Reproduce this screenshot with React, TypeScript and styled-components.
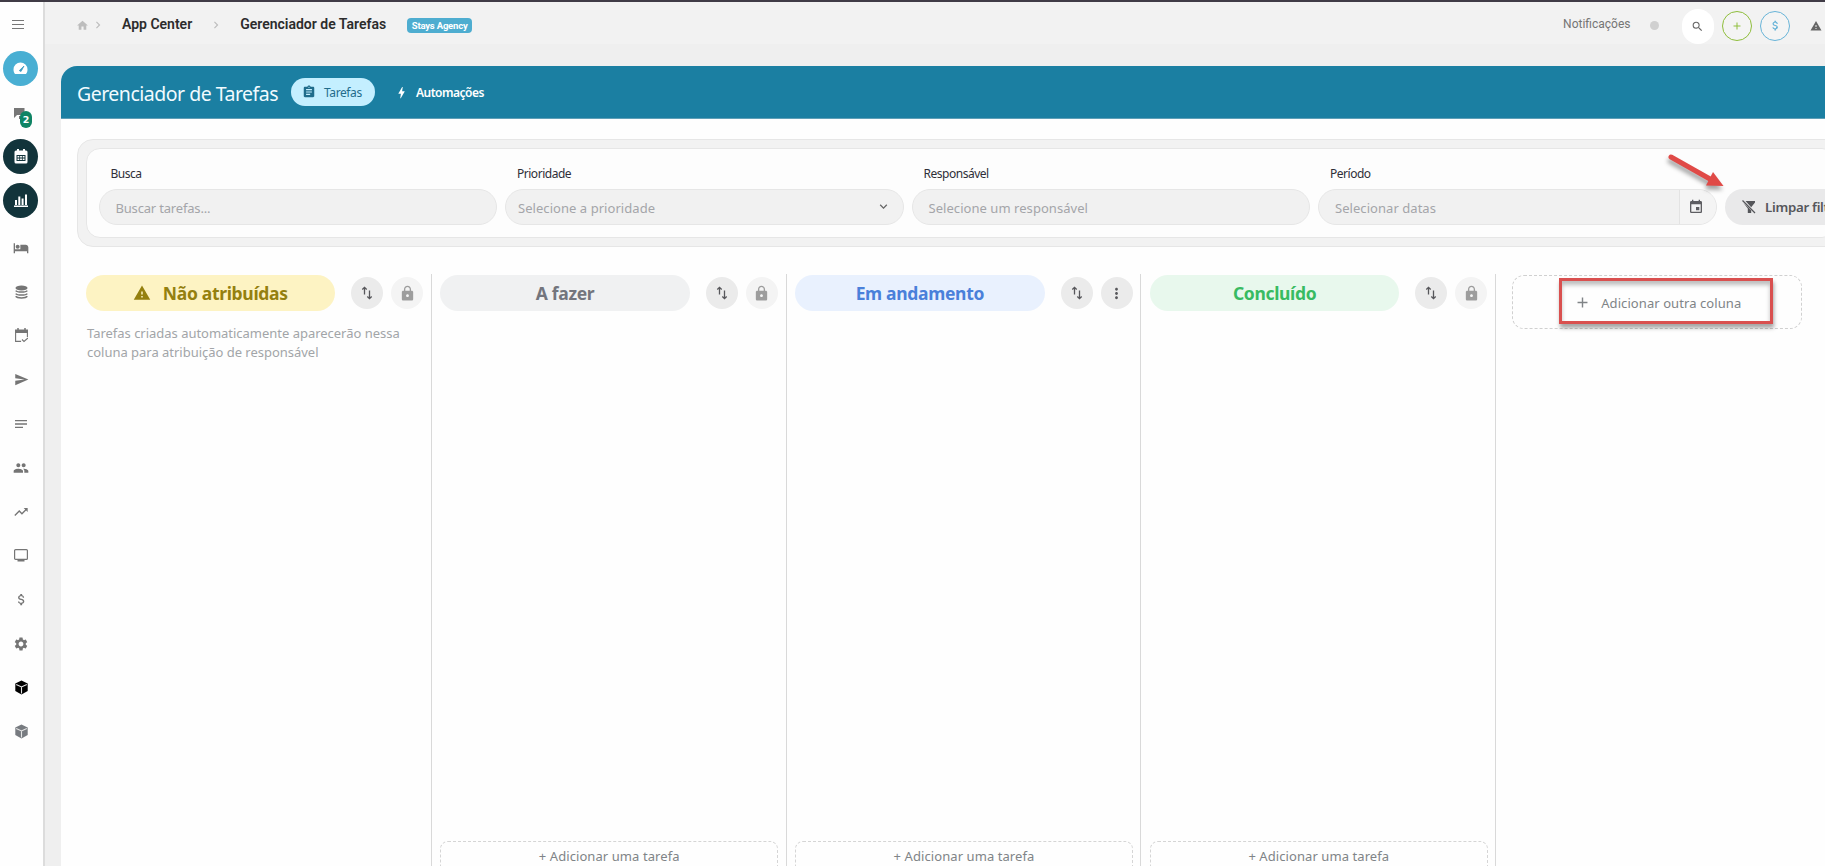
import React from "react";
import styled, { createGlobalStyle, css } from "styled-components";
import {
  MdHome, MdChevronRight, MdHotel, MdSend, MdPeople, MdTrendingUp,
  MdAttachMoney, MdSettings, MdSearch, MdAdd, MdWarning, MdLock, MdMoreVert, MdAssignment,
  MdBolt, MdEvent, MdExpandMore, MdNotes,
} from "react-icons/md";

const GlobalStyle = createGlobalStyle`
  *, *::before, *::after { box-sizing: border-box; }
  html, body { margin: 0; padding: 0; overflow: hidden; }
  body { font-family: "Noto Sans", "Open Sans", sans-serif; background: #efefef; }
  svg { display: block; flex: none; }
`;

const Page = styled.div`
  position: relative;
  width: 100vw;
  height: 100vh;
  display: flex;
  overflow: hidden;
  border-top: 2px solid #403c46;
`;

/* Sidebar */
const Sidebar = styled.nav`
  flex: none;
  width: 45px;
  background: #fefefe;
  border-right: 2px solid #dcdcdc;
  display: flex;
  flex-direction: column;
  color: #757575;
`;
const MenuSlot = styled.div`
  height: 44px;
  padding: 18px 0 0 12px;
`;
const NavItem = styled.div<{ $gapTop?: number }>`
  position: relative;
  width: 42px;
  height: 44px;
  flex: none;
  margin-top: ${(p) => p.$gapTop ?? 0}px;
  display: flex;
  align-items: center;
  justify-content: center;
`;
const NavDisc = styled.div<{ $bg: string }>`
  width: 35px;
  height: 35px;
  margin-right: 1px;
  border-radius: 50%;
  background: ${(p) => p.$bg};
  color: #fff;
  display: flex;
  align-items: center;
  justify-content: center;
`;
const NavBadge = styled.span`
  position: absolute;
  left: 20px;
  top: 21px;
  width: 12px;
  height: 17px;
  border-radius: 6px;
  background: #0f8465;
  color: #fff;
  font: 700 9.5px/17px "DejaVu Sans", sans-serif;
  text-align: center;
`;

/* Top bar */
const Main = styled.div`
  flex: 1;
  min-width: 0;
  display: flex;
  flex-direction: column;
  background: linear-gradient(#f2f2f2 0 42px, #efefef 42px);
`;
const TopBar = styled.header`
  flex: none;
  height: 64px;
  padding: 0 2px 18px 31px;
  display: flex;
  align-items: center;
  font-family: Roboto, sans-serif;
  color: #bdbdbd;
`;
const Crumb = styled.span`
  font-size: 14px;
  font-weight: 600;
  line-height: 16px;
  color: #2c2c2c;
  white-space: nowrap;
  margin-bottom: 3px;
`;
const CrumbSep = styled(MdChevronRight)<{ $before: number; $after: number }>`
  margin-left: ${(p) => p.$before}px;
  margin-right: ${(p) => p.$after}px;
`;
const AgencyTag = styled.span`
  margin-left: 21px;
  width: 65px;
  height: 15px;
  border-radius: 4px;
  background: #4eadd0;
  color: #fff;
  font-size: 9.5px;
  font-weight: 700;
  letter-spacing: -0.2px;
  line-height: 15.5px;
  text-align: center;
`;
const TopActions = styled.div`
  margin-left: auto;
  display: flex;
  align-items: center;
`;
const NotifyLabel = styled.span`
  font-size: 12px;
  color: #757575;
  line-height: 14px;
  margin-bottom: 2px;
`;
const StatusDot = styled.span`
  width: 9px;
  height: 9px;
  border-radius: 50%;
  background: #d0d0d0;
  margin: 1px 23.5px 0 19px;
`;
const SearchButton = styled.div`
  width: 32px;
  height: 35px;
  border-radius: 16px;
  background: #fff;
  color: #666;
  display: flex;
  align-items: center;
  justify-content: center;
  padding-right: 2px;
  margin: 3px 8px 0 0;
`;
const RingButton = styled.div<{ $color: string }>`
  width: 30px;
  height: 30px;
  border-radius: 50%;
  border: 1px solid ${(p) => p.$color};
  color: ${(p) => p.$color};
  background: #f4f4f4;
  display: flex;
  align-items: center;
  justify-content: center;
  margin: 1px 8px 0 0;
`;
const AlertSlot = styled.div`
  color: #666;
  margin: 1px 1px 0 12px;
`;

/* Card */
const Card = styled.section`
  flex: 1;
  min-height: 0;
  margin-left: 16px;
  display: flex;
  flex-direction: column;
  background: #fefefe;
  border-top-left-radius: 16px;
  overflow: hidden;
`;
const CardHeader = styled.div`
  flex: none;
  height: 53px;
  padding-left: 16px;
  background: #1b7fa2;
  border-bottom: 1px solid #5f9fb7;
  display: flex;
  align-items: center;
  color: #fff;
`;
const Title = styled.h1`
  margin: 3px 0 0;
  width: 214px;
  font-size: 19.5px;
  font-weight: 400;
  letter-spacing: -0.5px;
  white-space: nowrap;
  color: #f1fbff;
`;
const Tab = styled.div<{ $active?: boolean }>`
  height: 28px;
  display: flex;
  align-items: center;
  border-radius: 14px;
  font-size: 12px;
  letter-spacing: -0.4px;
  ${(p) =>
    p.$active
      ? css`width: 84px; padding-left: 11px; gap: 8px; background: #c4efff; color: #1f6c8b;`
      : css`padding-left: 19px; gap: 7px; font-weight: 600; letter-spacing: -0.5px;`}
`;

/* Filters */
const FilterPanel = styled.div`
  flex: none;
  height: 108px;
  margin: 20px -20px 0 16px;
  padding: 8px;
  background: #f2f2f2;
  border: 1px solid #e6e6e6;
  border-radius: 16px;
`;
const FilterCard = styled.div`
  height: 90px;
  padding: 16px 0 0 11.5px;
  display: flex;
  gap: 8px;
  background: #fdfdfd;
  border: 1px solid #e6e6e6;
  border-radius: 14px;
  white-space: nowrap;
`;
const Field = styled.div`
  flex: none;
  width: 398.5px;
`;
const FieldLabel = styled.div`
  height: 24px;
  padding: 1px 0 0 12px;
  font-size: 12px;
  line-height: 16px;
  letter-spacing: -0.48px;
  color: #2f2f38;
`;
const Control = styled.div<{ $inset?: number }>`
  height: 36px;
  padding-left: ${(p) => p.$inset ?? 16}px;
  display: flex;
  align-items: center;
  justify-content: space-between;
  overflow: hidden;
  background: #f1f1f1;
  border: 1px solid #e6e6e6;
  border-radius: 18px;
`;
const Placeholder = styled.span<{ $track?: number }>`
  padding-top: 2px;
  font-size: 13px;
  letter-spacing: ${(p) => p.$track ?? 0.05}px;
  color: #a4a5a9;
`;
const SelectArrow = styled(MdExpandMore)`
  margin: 0 12px 1px 0;
  color: #666;
`;
const DateButton = styled.div`
  width: 37px;
  height: 34px;
  padding-left: 8px;
  display: flex;
  align-items: center;
  border-left: 1px solid #e3e3e3;
  background: #f4f4f4;
  color: #5e5e62;
`;
const ClearButton = styled.div`
  flex: none;
  width: 150px;
  height: 36px;
  margin-top: 24px;
  padding: 0 0 0 15px;
  display: flex;
  align-items: center;
  gap: 7.5px;
  border-radius: 18px;
  background: #e9e9ea;
  color: #55565a;
  font-size: 13.3px;
  font-weight: 600;
  letter-spacing: -0.3px;
`;

/* Board */
const Board = styled.div`
  flex: 1;
  min-height: 0;
  margin-top: 27px;
  padding-left: 16px;
  display: flex;
`;
const Column = styled.div`
  flex: none;
  width: 354.8px;
  padding: 1px 7.5px 0 8.5px;
  border-right: 1px solid #d9d9d9;
  display: flex;
  flex-direction: column;
`;
const ColumnHead = styled.div`
  display: flex;
  align-items: center;
  height: 36px;
`;
const Pill = styled.div<{ $bg: string; $fg: string }>`
  flex: none;
  width: 249.5px;
  height: 36px;
  margin-right: 16px;
  border-radius: 18px;
  display: flex;
  align-items: center;
  justify-content: center;
  gap: 12px;
  background: ${(p) => p.$bg};
  color: ${(p) => p.$fg};
  font-size: 17.5px;
  font-weight: 700;
  letter-spacing: -0.32px;
`;
const RoundButton = styled.div<{ $muted?: boolean }>`
  flex: none;
  width: 32px;
  height: 32px;
  margin-right: 8px;
  border-radius: 50%;
  display: flex;
  align-items: center;
  justify-content: center;
  background: ${(p) => (p.$muted ? "#f4f4f4" : "#ebebeb")};
  color: ${(p) => (p.$muted ? "#9d9d9d" : "#57575b")};
`;
const Hint = styled.p`
  margin: 12.5px 0 0 1.5px;
  font-size: 13px;
  line-height: 19px;
  letter-spacing: -0.02px;
  white-space: nowrap;
  color: #a2a5a8;
`;
const AddTask = styled.div`
  height: 40px;
  margin: auto 0 -15px;
  padding-top: 4px;
  border: 1px dashed #d5d5d5;
  border-radius: 8px;
  text-align: center;
  font-size: 13px;
  line-height: 20px;
  letter-spacing: 0.08px;
  color: #808487;
`;
const AddColumn = styled.div`
  position: relative;
  flex: none;
  width: 290px;
  height: 54px;
  margin: 1px 0 0 16px;
  padding: 1px 0 0 61px;
  display: flex;
  align-items: center;
  gap: 10px;
  border: 1px dashed #d0d0d0;
  border-radius: 12px;
  font-size: 13px;
  letter-spacing: 0.08px;
  color: #808487;
`;
const Highlight = styled.div`
  position: absolute;
  left: 46px;
  top: 2px;
  width: 214px;
  height: 46px;
  border: 3px solid #d9504f;
  box-shadow: 1px 4px 4px rgba(0, 0, 0, 0.35), inset 0 4px 4px rgba(0, 0, 0, 0.25);
`;
const Arrow = styled.svg`
  position: absolute;
  left: 1660px;
  top: 145px;
  filter: drop-shadow(-1px 4px 2px rgba(0, 0, 0, 0.35));
`;

const BurgerIcon = () => (
  <svg width="12" height="9" viewBox="0 0 12 9" stroke="#777" strokeWidth="1"><path d="M0 .5h12M0 4.5h12M0 8.5h12" /></svg>
);
const GaugeIcon = () => (
  <svg width="15" height="13" viewBox="0 0 15 13">
    <path d="M7.5.5a7 7 0 0 0-7 7c0 1.800.5 3.200 1.500 4.500h11c1-1.300 1.500-2.700 1.500-4.500a7 7 0 0 0-7-7z" fill="#fff" />
    <path d="M6.300 8.600 11 4 8 9.500z" fill="#3d9cc1" stroke="#3d9cc1" strokeWidth=".8" strokeLinejoin="round" />
  </svg>
);
const ChatIcon = () => (
  <svg width="14" height="8" viewBox="0 0 14 8" fill="#777" overflow="visible"><path d="M0 0h10.500v7H3L0 10zM9 4.500h2V11H5V8h4z" /></svg>
);
const CalendarIcon = () => (
  <svg width="14" height="15" viewBox="0 0 14 15">
    <path d="M2 1.500h1V0h2v1.500h4V0h2v1.500h1a1.500 1.500 0 0 1 1.500 1.500v10A1.500 1.500 0 0 1 12 14.500H2A1.500 1.500 0 0 1 .5 13V3A1.500 1.500 0 0 1 2 1.500z" fill="#fff" />
    <path d="M2.500 6h9v6h-9z" fill="#12343b" />
    <path d="M3.500 7h1.800v1.600H3.500zM6.100 7h1.800v1.600H6.100zM8.700 7h1.800v1.600H8.700zM3.500 9.600h1.800v1.500H3.500zM6.100 9.600h1.800v1.500H6.100zM8.700 9.600h1.800v1.500H8.700z" fill="#fff" />
  </svg>
);
const BarsIcon = () => (
  <svg width="14" height="13" viewBox="0 0 14 13" fill="#fff"><path d="M0 11.500h14V13H0zM1 6h2v5H1zM4.300 2.500h2v8.500h-2zM7.600 4.500h2V11h-2zM11 .5h2V11h-2z" /></svg>
);
const DatabaseIcon = () => (
  <svg width="13" height="14" viewBox="0 0 13 14">
    <ellipse cx="6.500" cy="3" rx="6" ry="2.600" fill="#757575" />
    <path d="M.7 5.600c1.600 2 10 2 11.600 0M.7 8.600c1.600 2 10 2 11.600 0M.7 11.300c1.600 2.200 10 2.200 11.600 0" fill="none" stroke="#757575" strokeWidth="1.500" />
  </svg>
);
const CheckCalendarIcon = () => (
  <svg width="13" height="15" viewBox="0 0 13 15" fill="none" stroke="#757575">
    <path d="M3 0v2M10 0v2" strokeWidth="1.500" /><path d="M0 1.500h13V5H0z" fill="#757575" stroke="none" />
    <path d="M12.400 9V3M.6 3v10.400h5.500M7 11.500l2 2 4-3.500" strokeWidth="1.100" />
  </svg>
);
const MonitorIcon = () => (
  <svg width="14" height="13" viewBox="0 0 14 13"><rect x=".6" y=".6" width="12.800" height="9.800" rx="1" fill="none" stroke="#757575" strokeWidth="1.200" /><path d="M3.500 10.500h7v2h-7z" fill="#757575" /></svg>
);
const CubeIcon = ({ fill }: { fill: string }) => (
  <svg width="13" height="15" viewBox="0 0 13 15"><path d="M6.500.5 12.700 3.500v7.500L6.500 14.500.3 11V3.500z" fill={fill} /><path d="M1.200 4.400 6.500 7l5.300-2.600M6.500 7v6.500" fill="none" stroke="#e4e4e4" strokeWidth="1.100" /></svg>
);
const SwapIcon = () => (
  <svg width="12" height="14" viewBox="0 0 12 14" fill="none" stroke="currentColor" strokeWidth="1.300"><path d="M3.500 8.500V1.500M1.300 3.500l2.200-2.200L5.700 3.500M8.500 4.500v8M6.300 10.500l2.200 2.200 2.200-2.200" /></svg>
);
const ClearFilterIcon = () => (
  <svg width="18" height="18" viewBox="0 0 18 18" fill="#55565a"><path d="M5.500 3H15v1.500l-3.800 4.700zM6.800 8l4.400 4.400V15H7.800v-4.500L3.500 5z" /><path d="m2.500 2.500 12.500 12.500" stroke="#55565a" strokeWidth="1.300" /></svg>
);

const columns = [
  { title: "Não atribuídas", bg: "#fdf3c3", fg: "#94800f", warn: true, locked: true },
  { title: "A fazer", bg: "#f0f1f2", fg: "#73757d", locked: true },
  { title: "Em andamento", bg: "#e9f1fe", fg: "#4a80da", locked: false },
  { title: "Concluído", bg: "#e8f8ed", fg: "#38bb62", locked: true },
];

export default function App() {
  return (
    <Page>
      <GlobalStyle />
      <Sidebar>
        <MenuSlot><BurgerIcon /></MenuSlot>
        <NavItem><NavDisc $bg="#49afd3"><GaugeIcon /></NavDisc></NavItem>
        <NavItem><ChatIcon /><NavBadge>2</NavBadge></NavItem>
        <NavItem><NavDisc $bg="#12343b"><CalendarIcon /></NavDisc></NavItem>
        <NavItem><NavDisc $bg="#12343b"><BarsIcon /></NavDisc></NavItem>
        <NavItem $gapTop={3.5}><MdHotel size={16} /></NavItem>
        <NavItem><DatabaseIcon /></NavItem>
        <NavItem><CheckCalendarIcon /></NavItem>
        <NavItem><MdSend size={15} /></NavItem>
        <NavItem><MdNotes size={16} /></NavItem>
        <NavItem><MdPeople size={16} /></NavItem>
        <NavItem><MdTrendingUp size={16} /></NavItem>
        <NavItem><MonitorIcon /></NavItem>
        <NavItem><MdAttachMoney size={15} /></NavItem>
        <NavItem><MdSettings size={16} /></NavItem>
        <NavItem><CubeIcon fill="#000" /></NavItem>
        <NavItem><CubeIcon fill="#777b80" /></NavItem>
      </Sidebar>
      <Main>
        <TopBar>
          <MdHome size={13} />
          <CrumbSep size={14} $before={2} $after={17} />
          <Crumb>App Center</Crumb>
          <CrumbSep size={14} $before={17} $after={17} />
          <Crumb>Gerenciador de Tarefas</Crumb>
          <AgencyTag>Stays Agency</AgencyTag>
          <TopActions>
            <NotifyLabel>Notificações</NotifyLabel>
            <StatusDot />
            <SearchButton><MdSearch size={13} /></SearchButton>
            <RingButton $color="#8fbe3c"><MdAdd size={12} /></RingButton>
            <RingButton $color="#68b4d8"><MdAttachMoney size={13} /></RingButton>
            <AlertSlot><MdWarning size={12} /></AlertSlot>
          </TopActions>
        </TopBar>
        <Card>
          <CardHeader>
            <Title>Gerenciador de Tarefas</Title>
            <Tab $active><MdAssignment size={14} />Tarefas</Tab>
            <Tab><MdBolt size={15} />Automações</Tab>
          </CardHeader>
          <FilterPanel>
            <FilterCard>
              <Field>
                <FieldLabel>Busca</FieldLabel>
                <Control><Placeholder $track={-0.18}>Buscar tarefas...</Placeholder></Control>
              </Field>
              <Field>
                <FieldLabel>Prioridade</FieldLabel>
                <Control $inset={12}><Placeholder>Selecione a prioridade</Placeholder><SelectArrow size={15} /></Control>
              </Field>
              <Field>
                <FieldLabel>Responsável</FieldLabel>
                <Control><Placeholder>Selecione um responsável</Placeholder></Control>
              </Field>
              <Field>
                <FieldLabel>Período</FieldLabel>
                <Control>
                  <Placeholder>Selecionar datas</Placeholder>
                  <DateButton><MdEvent size={16} /></DateButton>
                </Control>
              </Field>
              <ClearButton><ClearFilterIcon />Limpar filtros</ClearButton>
            </FilterCard>
          </FilterPanel>
          <Board>
            {columns.map((c) => (
              <Column key={c.title}>
                <ColumnHead>
                  <Pill $bg={c.bg} $fg={c.fg}>{c.warn && <MdWarning size={18} />}{c.title}</Pill>
                  <RoundButton><SwapIcon /></RoundButton>
                  <RoundButton $muted={c.locked}>{c.locked ? <MdLock size={17} /> : <MdMoreVert size={17} />}</RoundButton>
                </ColumnHead>
                {c.warn ? (
                  <Hint>Tarefas criadas automaticamente aparecerão nessa<br />coluna para atribuição de responsável</Hint>
                ) : (
                  <AddTask>+ Adicionar uma tarefa</AddTask>
                )}
              </Column>
            ))}
            <AddColumn>
              <MdAdd size={17} />Adicionar outra coluna
              <Highlight />
            </AddColumn>
          </Board>
        </Card>
      </Main>
      <Arrow width="70" height="50" viewBox="0 0 70 50">
        <path d="M11 10 50 32" stroke="#e04a47" strokeWidth="5" strokeLinecap="round" />
        <path d="M53 25 63.500 39 46 38.500z" fill="#e04a47" />
      </Arrow>
    </Page>
  );
}
